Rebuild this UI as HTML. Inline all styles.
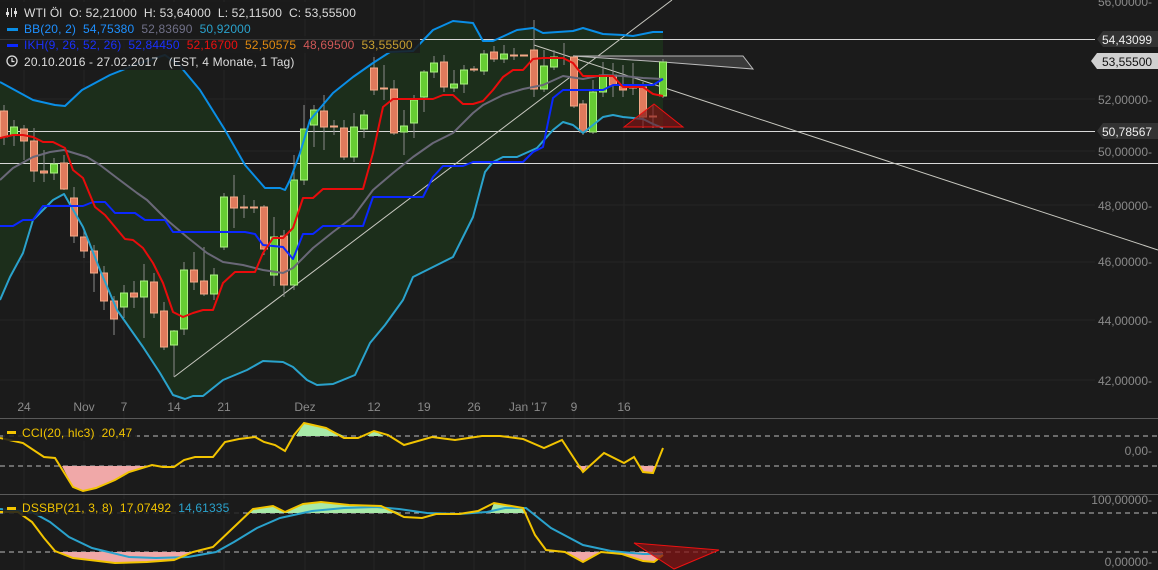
<!DOCTYPE html>
<html><head><meta charset="utf-8"><style>
body{margin:0;background:#1b1b1b;}
svg{display:block;font-family:"Liberation Sans",sans-serif;}
.lg text{white-space:pre;letter-spacing:0.15px;}
</style></head><body>
<svg width="1158" height="570" viewBox="0 0 1158 570" xmlns="http://www.w3.org/2000/svg">
<rect width="1158" height="570" fill="#1b1b1b"/>
<g stroke="#252525" stroke-width="1">
<line x1="0" y1="99" x2="1095" y2="99"/><line x1="0" y1="151" x2="1095" y2="151"/><line x1="0" y1="205" x2="1095" y2="205"/><line x1="0" y1="262" x2="1095" y2="262"/><line x1="0" y1="320" x2="1095" y2="320"/><line x1="0" y1="380" x2="1095" y2="380"/>
<line x1="24" y1="0" x2="24" y2="570"/><line x1="84" y1="0" x2="84" y2="570"/><line x1="124" y1="0" x2="124" y2="570"/><line x1="174" y1="0" x2="174" y2="570"/><line x1="224" y1="0" x2="224" y2="570"/><line x1="305" y1="0" x2="305" y2="570"/><line x1="374" y1="0" x2="374" y2="570"/><line x1="424" y1="0" x2="424" y2="570"/><line x1="474" y1="0" x2="474" y2="570"/><line x1="525" y1="0" x2="525" y2="570"/><line x1="574" y1="0" x2="574" y2="570"/><line x1="624" y1="0" x2="624" y2="570"/>
</g>
<polygon fill="#1c2e1b" points="0,82 33,100 55,105 65,106 82,90 110,75 140,63 165,55 180,66 200,90 225,130 245,165 265,188 280,188 285,190 290,180 300,153 310,120 333,93 353,77 373,63 390,52 413,51 433,30 453,21 473,23 483,41 493,41 517,30 533,28 543,33 573,31 583,28 603,34 623,35 633,36 653,32 663,32 663,128 653,124 643,119 623,117 613,115 603,117 583,133 573,125 563,122 553,130 537,148 517,157 503,157 493,162 485,172 473,217 453,257 433,267 413,277 403,300 385,325 370,343 355,375 333,384 317,385 307,380 293,367 283,362 263,361 247,370 223,380 203,396 193,396 185,399 173,395 160,373 143,347 117,310 100,270 83,227 64,194 53,200 33,220 23,253 10,277 0,300"/>
<g stroke="#d8d8d8" stroke-width="1">
<line x1="0" y1="39.5" x2="1095" y2="39.5"/><line x1="0" y1="131.5" x2="1095" y2="131.5"/><line x1="0" y1="163.5" x2="1158" y2="163.5"/>
</g>
<g stroke="#c8c8c0" stroke-width="1" fill="none">
<line x1="174" y1="377" x2="672" y2="0"/>
<line x1="534" y1="45" x2="1158" y2="250"/>
</g>
<polygon points="573,56 743,56 753,69 663,62" fill="#3a3a3a" stroke="#bbb" stroke-width="1"/>
<g stroke="#8a8a8a" stroke-width="1">
<line x1="4" y1="105" x2="4" y2="145"/><line x1="14" y1="120" x2="14" y2="146"/><line x1="24" y1="125" x2="24" y2="160"/><line x1="34" y1="128" x2="34" y2="182"/><line x1="44" y1="150" x2="44" y2="182"/><line x1="54" y1="158" x2="54" y2="180"/><line x1="64" y1="155" x2="64" y2="190"/><line x1="74" y1="187" x2="74" y2="243"/><line x1="84" y1="230" x2="84" y2="258"/><line x1="94" y1="245" x2="94" y2="292"/><line x1="104" y1="266" x2="104" y2="310"/><line x1="114" y1="296" x2="114" y2="335"/><line x1="124" y1="285" x2="124" y2="318"/><line x1="134" y1="281" x2="134" y2="308"/><line x1="144" y1="264" x2="144" y2="338"/><line x1="154" y1="273" x2="154" y2="318"/><line x1="164" y1="302" x2="164" y2="350"/><line x1="174" y1="330" x2="174" y2="377"/><line x1="184" y1="262" x2="184" y2="335"/><line x1="194" y1="252" x2="194" y2="290"/><line x1="204" y1="247" x2="204" y2="296"/><line x1="214" y1="268" x2="214" y2="300"/><line x1="224" y1="193" x2="224" y2="250"/><line x1="234" y1="175" x2="234" y2="228"/><line x1="244" y1="195" x2="244" y2="218"/><line x1="254" y1="200" x2="254" y2="213"/><line x1="264" y1="205" x2="264" y2="255"/><line x1="274" y1="217" x2="274" y2="286"/><line x1="284" y1="230" x2="284" y2="297"/><line x1="294" y1="155" x2="294" y2="290"/><line x1="304" y1="105" x2="304" y2="185"/><line x1="314" y1="105" x2="314" y2="147"/><line x1="324" y1="95" x2="324" y2="150"/><line x1="334" y1="120" x2="334" y2="135"/><line x1="344" y1="120" x2="344" y2="160"/><line x1="354" y1="113" x2="354" y2="162"/><line x1="364" y1="110" x2="364" y2="138"/><line x1="374" y1="57" x2="374" y2="95"/><line x1="384" y1="65" x2="384" y2="100"/><line x1="394" y1="80" x2="394" y2="135"/><line x1="404" y1="110" x2="404" y2="155"/><line x1="414" y1="95" x2="414" y2="138"/><line x1="424" y1="70" x2="424" y2="112"/><line x1="434" y1="56" x2="434" y2="78"/><line x1="444" y1="55" x2="444" y2="92"/><line x1="454" y1="70" x2="454" y2="92"/><line x1="464" y1="65" x2="464" y2="93"/><line x1="474" y1="66" x2="474" y2="72"/><line x1="484" y1="50" x2="484" y2="75"/><line x1="494" y1="46" x2="494" y2="62"/><line x1="504" y1="45" x2="504" y2="63"/><line x1="514" y1="48" x2="514" y2="60"/><line x1="534" y1="20" x2="534" y2="97"/><line x1="544" y1="50" x2="544" y2="92"/><line x1="554" y1="50" x2="554" y2="70"/><line x1="564" y1="43" x2="564" y2="65"/><line x1="574" y1="55" x2="574" y2="108"/><line x1="583" y1="100" x2="583" y2="135"/><line x1="593" y1="80" x2="593" y2="134"/><line x1="603" y1="62" x2="603" y2="97"/><line x1="613" y1="63" x2="613" y2="97"/><line x1="623" y1="65" x2="623" y2="97"/><line x1="633" y1="63" x2="633" y2="95"/><line x1="643" y1="82" x2="643" y2="128"/><line x1="653" y1="105" x2="653" y2="128"/><line x1="663" y1="59" x2="663" y2="98"/>
</g>
<g fill="#e07a5c" stroke="#f4a887" stroke-width="1">
<rect x="0.5" y="111" width="7" height="26"/><rect x="20.5" y="129" width="7" height="12"/><rect x="30.5" y="141" width="7" height="30"/><rect x="40.5" y="171" width="7" height="2"/><rect x="60.5" y="163" width="7" height="26"/><rect x="70.5" y="198" width="7" height="38"/><rect x="80.5" y="237" width="7" height="14"/><rect x="90.5" y="251" width="7" height="22"/><rect x="100.5" y="273" width="7" height="28"/><rect x="110.5" y="301" width="7" height="18"/><rect x="130.5" y="293" width="7" height="4"/><rect x="150.5" y="282" width="7" height="31"/><rect x="160.5" y="311" width="7" height="36"/><rect x="190.5" y="270" width="7" height="12"/><rect x="200.5" y="281" width="7" height="13"/><rect x="230.5" y="197" width="7" height="11"/><rect x="240.5" y="207" width="7" height="1"/><rect x="250.5" y="207" width="7" height="1"/><rect x="260.5" y="207" width="7" height="42"/><rect x="280.5" y="236" width="7" height="49"/><rect x="320.5" y="111" width="7" height="16"/><rect x="330.5" y="126" width="7" height="1"/><rect x="340.5" y="128" width="7" height="29"/><rect x="370.5" y="68" width="7" height="22"/><rect x="380.5" y="88" width="7" height="1"/><rect x="390.5" y="89" width="7" height="44"/><rect x="440.5" y="62" width="7" height="25"/><rect x="470.5" y="69" width="7" height="1"/><rect x="490.5" y="52" width="7" height="7"/><rect x="510.5" y="55" width="7" height="1"/><rect x="520.5" y="55" width="7" height="1"/><rect x="530.5" y="50" width="7" height="39"/><rect x="570.5" y="57" width="7" height="49"/><rect x="579.5" y="104" width="7" height="28"/><rect x="609.5" y="75" width="7" height="10"/><rect x="619.5" y="85" width="7" height="5"/><rect x="629.5" y="87" width="7" height="1"/><rect x="639.5" y="87" width="7" height="30"/><rect x="649.5" y="116" width="7" height="1"/>
</g>
<g fill="#66cc33" stroke="#a8f080" stroke-width="1">
<rect x="10.5" y="127" width="7" height="8"/><rect x="50.5" y="164" width="7" height="9"/><rect x="120.5" y="293" width="7" height="14"/><rect x="140.5" y="281" width="7" height="16"/><rect x="170.5" y="331" width="7" height="14"/><rect x="180.5" y="270" width="7" height="59"/><rect x="210.5" y="275" width="7" height="19"/><rect x="220.5" y="197" width="7" height="50"/><rect x="270.5" y="237" width="7" height="38"/><rect x="290.5" y="180" width="7" height="105"/><rect x="300.5" y="129" width="7" height="51"/><rect x="310.5" y="110" width="7" height="15"/><rect x="350.5" y="127" width="7" height="30"/><rect x="360.5" y="115" width="7" height="14"/><rect x="400.5" y="126" width="7" height="6"/><rect x="410.5" y="100" width="7" height="23"/><rect x="420.5" y="72" width="7" height="25"/><rect x="430.5" y="63" width="7" height="9"/><rect x="450.5" y="84" width="7" height="4"/><rect x="460.5" y="70" width="7" height="14"/><rect x="480.5" y="54" width="7" height="17"/><rect x="500.5" y="54" width="7" height="5"/><rect x="540.5" y="66" width="7" height="23"/><rect x="550.5" y="57" width="7" height="10"/><rect x="589.5" y="92" width="7" height="40"/><rect x="599.5" y="75" width="7" height="17"/><rect x="659.5" y="62" width="7" height="34"/>
</g>
<g fill="none" stroke-width="2" stroke-linejoin="round">
<polyline stroke="#6a6878" points="0,180 13,168 33,157 50,152 64,150 87,157 100,165 117,178 137,193 147,200 167,220 187,237 207,253 223,262 243,265 263,270 283,273 293,268 313,248 333,232 353,217 373,190 393,173 413,157 433,143 453,133 473,113 483,105 503,95 523,89 543,85 563,76 583,79 603,75 623,76 643,78 663,79"/>
<polyline stroke="#0a8ee6" points="0,82 33,100 55,105 65,106 82,90 110,75 140,63 165,55 180,66 200,90 225,130 245,165 265,188 280,188 285,190 290,180 300,153 310,120 333,93 353,77 373,63 390,52 413,51 433,30 453,21 473,23 483,41 493,41 517,30 533,28 543,33 573,31 583,28 603,34 623,35 633,36 653,32 663,32"/>
<polyline stroke="#2aa2cc" points="0,300 10,277 23,253 33,220 53,200 64,194 83,227 100,270 117,310 143,347 160,373 173,395 185,399 193,396 203,396 223,380 247,370 263,361 283,362 293,367 307,380 317,385 333,384 355,375 370,343 385,325 403,300 413,277 433,267 453,257 473,217 485,172 493,162 503,157 517,157 537,148 553,130 563,122 573,125 583,133 603,117 613,115 623,117 643,119 653,124 663,128"/>
<polyline stroke="#0b28ff" points="0,226 13,226 23,220 33,220 43,206 83,206 93,202 105,202 115,213 135,213 145,220 165,220 173,232 245,232 255,234 263,245 283,247 293,259 303,234 313,234 323,226 363,226 373,197 423,197 433,177 443,166 463,166 473,162 523,162 533,152 543,147 553,98 563,90 603,90 613,85 623,85 653,85 663,79"/>
<polyline stroke="#e80c0c" points="0,138 13,135 23,135 33,137 43,142 53,142 65,148 73,170 83,178 95,207 105,215 125,239 133,240 143,248 153,263 163,283 173,312 183,317 193,313 203,310 213,310 223,283 235,272 255,272 263,253 273,238 283,238 293,228 303,198 313,198 323,189 363,189 373,153 383,107 393,99 433,99 443,95 453,95 463,104 473,104 483,101 493,90 503,77 513,70 523,70 533,59 543,58 563,58 573,63 583,76 613,76 623,87 643,87 653,94 663,96"/>
</g>
<polygon points="624,127 654,104 683,127" fill="rgba(130,20,20,0.65)" stroke="#ee1111" stroke-width="1"/>
<g fill="#8a8a8a" font-size="12" text-anchor="middle">
<text x="24" y="411">24</text><text x="84" y="411">Nov</text><text x="124" y="411">7</text><text x="174" y="411">14</text><text x="224" y="411">21</text><text x="305" y="411">Dez</text><text x="374" y="411">12</text><text x="424" y="411">19</text><text x="474" y="411">26</text><text x="528" y="411">Jan '17</text><text x="574" y="411">9</text><text x="624" y="411">16</text>
</g>
<line x1="0" y1="418.5" x2="1158" y2="418.5" stroke="#5a5a5a"/>
<line x1="0" y1="494.5" x2="1158" y2="494.5" stroke="#5a5a5a"/>
<g stroke="#bbbbbb" stroke-dasharray="5,4"><line x1="0" y1="436" x2="1158" y2="436"/><line x1="0" y1="466" x2="1158" y2="466"/><line x1="0" y1="513" x2="1158" y2="513"/><line x1="0" y1="552" x2="1158" y2="552"/></g>
<polygon fill="#f0a8a8" points="62,466 73,487 83,491 96,488 115,480 129,472 152,466"/>
<polygon fill="#a8eaa8" points="296,436 304,423 326,428 344,436"/>
<polygon fill="#a8eaa8" points="367,436 374,431 384,436"/>
<polygon fill="#f0a8a8" points="576,466 583,472 587,466"/>
<polygon fill="#f0a8a8" points="640,466 643,472 653,473 655,466"/>
<polyline fill="none" stroke="#f2c400" stroke-width="2" points="0,438 23,443 44,457 55,458 73,487 83,491 96,488 115,480 129,472 152,465 163,467 174,467 184,460 195,457 213,457 225,442 239,439 255,437 264,442 275,445 285,451 294,435 304,423 326,428 344,438 358,438 374,431 388,435 404,445 432,437 455,440 482,436 500,436 523,439 544,448 562,440 583,472 604,453 624,463 634,457 643,472 653,473 663,448"/>
<polygon fill="#a8eaa8" points="248,513 253,509 273,506 285,512 303,504 321,502 349,505 381,506 400,513 490,513 494,503 523,508 525,513"/>
<polygon fill="#f0a8a8" points="52,552 55,551 73,558 115,563 147,562 174,560 193,552"/>
<polygon fill="#f0a8a8" points="546,552 565,552 583,562 601,552 622,554 643,561 654,562 663,555 663,552"/>
<polyline fill="none" stroke="#2aa2cc" stroke-width="2" points="0,509 32,512 50,522 69,537 92,548 129,557 156,558 188,557 216,552 234,542 257,528 280,518 312,511 344,508 376,507 399,509 427,513 459,514 487,512 505,508 526,508 551,528 583,545 611,551 643,554 663,554"/>
<polyline fill="none" stroke="#f2c400" stroke-width="2" points="0,512 18,512 32,522 44,538 55,551 73,558 115,563 147,562 174,560 193,552 213,547 234,527 253,509 273,506 285,512 303,504 321,502 349,505 381,506 404,517 422,518 436,514 459,514 478,511 494,503 523,508 535,535 546,550 565,552 583,562 601,552 622,554 643,561 654,562 663,555"/>
<polygon points="634,543 719,550 674,569" fill="rgba(130,20,20,0.75)" stroke="#ee1111" stroke-width="1"/>
<g fill="#8a8a8a" font-size="12" text-anchor="end">
<text x="1152" y="6">56,00000-</text><text x="1152" y="104">52,00000-</text><text x="1152" y="156">50,00000-</text><text x="1152" y="210">48,00000-</text><text x="1152" y="266">46,00000-</text><text x="1152" y="325">44,00000-</text><text x="1152" y="385">42,00000-</text><text x="1152" y="455">0,00-</text><text x="1152" y="504">100,00000-</text><text x="1152" y="566">0,00000-</text>
</g>
<g font-size="12">
<polygon points="1097,39 1103,31 1158,31 1158,47 1103,47" fill="#333"/><text x="1102" y="44" fill="#eee">54,43099</text>
<polygon points="1091,61 1097,53 1158,53 1158,69 1097,69" fill="#d0d0d0"/><text x="1102" y="66" fill="#111">53,55500</text>
<polygon points="1097,131 1103,123 1158,123 1158,139 1103,139" fill="#333"/><text x="1102" y="136" fill="#eee">50,78567</text>
</g>
<rect x="0" y="2" width="355" height="17" fill="#1b1b1b" opacity="0.9"/>
<rect x="0" y="19" width="250" height="17" fill="#1b1b1b" opacity="0.9"/>
<rect x="0" y="36" width="420" height="17" fill="#1b1b1b" opacity="0.85"/>
<rect x="0" y="53" width="293" height="17" fill="#1b1b1b" opacity="0.9"/>
<g font-size="12" class="lg">
<g stroke="#ddd" stroke-width="1"><line x1="7.5" y1="8" x2="7.5" y2="17"/><line x1="11.5" y1="8" x2="11.5" y2="17"/><line x1="15.5" y1="8" x2="15.5" y2="17"/></g>
<rect x="6" y="12" width="3" height="3" fill="#ddd"/><rect x="14" y="11" width="3" height="3" fill="#ddd"/>
<text x="24" y="17" fill="#ddd">WTI Öl  O: 52,21000  H: 53,64000  L: 52,11500  C: 53,55500</text>
<rect x="7" y="28" width="11" height="3" fill="#0a8ee6"/>
<text x="24" y="33"><tspan fill="#1e90ff">BB(20, 2)</tspan><tspan fill="#1e90ff" dx="7">54,75380</tspan><tspan fill="#707088" dx="7">52,83690</tspan><tspan fill="#2aa2cc" dx="7">50,92000</tspan></text>
<rect x="7" y="44" width="11" height="3" fill="#0b28ff"/>
<text x="24" y="49"><tspan fill="#1a30ff">IKH(9, 26, 52, 26)</tspan><tspan fill="#1a30ff" dx="7">52,84450</tspan><tspan fill="#ee1010" dx="7">52,16700</tspan><tspan fill="#e08a10" dx="7">52,50575</tspan><tspan fill="#d05858" dx="7">48,69500</tspan><tspan fill="#c8a030" dx="7">53,55500</tspan></text>
<circle cx="12" cy="61" r="5" fill="none" stroke="#ddd" stroke-width="1.3"/><path d="M12 58v3.5h2.5" fill="none" stroke="#ddd" stroke-width="1.2"/>
<text x="24" y="66" fill="#ddd">20.10.2016 - 27.02.2017   (EST, 4 Monate, 1 Tag)</text>
<rect x="3" y="424" width="134" height="17" fill="#1b1b1b" opacity="0.85"/>
<rect x="7" y="431" width="9" height="3" fill="#f2c400"/>
<text x="22" y="437" fill="#f2c400">CCI(20, hlc3)  20,47</text>
<rect x="3" y="499" width="236" height="17" fill="#1b1b1b" opacity="0.85"/>
<rect x="7" y="507" width="9" height="3" fill="#f2c400"/>
<text x="22" y="512"><tspan fill="#f2c400">DSSBP(21, 3, 8)  17,07492</tspan><tspan fill="#2aa2cc" dx="7">14,61335</tspan></text>
</g>
</svg>
</body></html>
